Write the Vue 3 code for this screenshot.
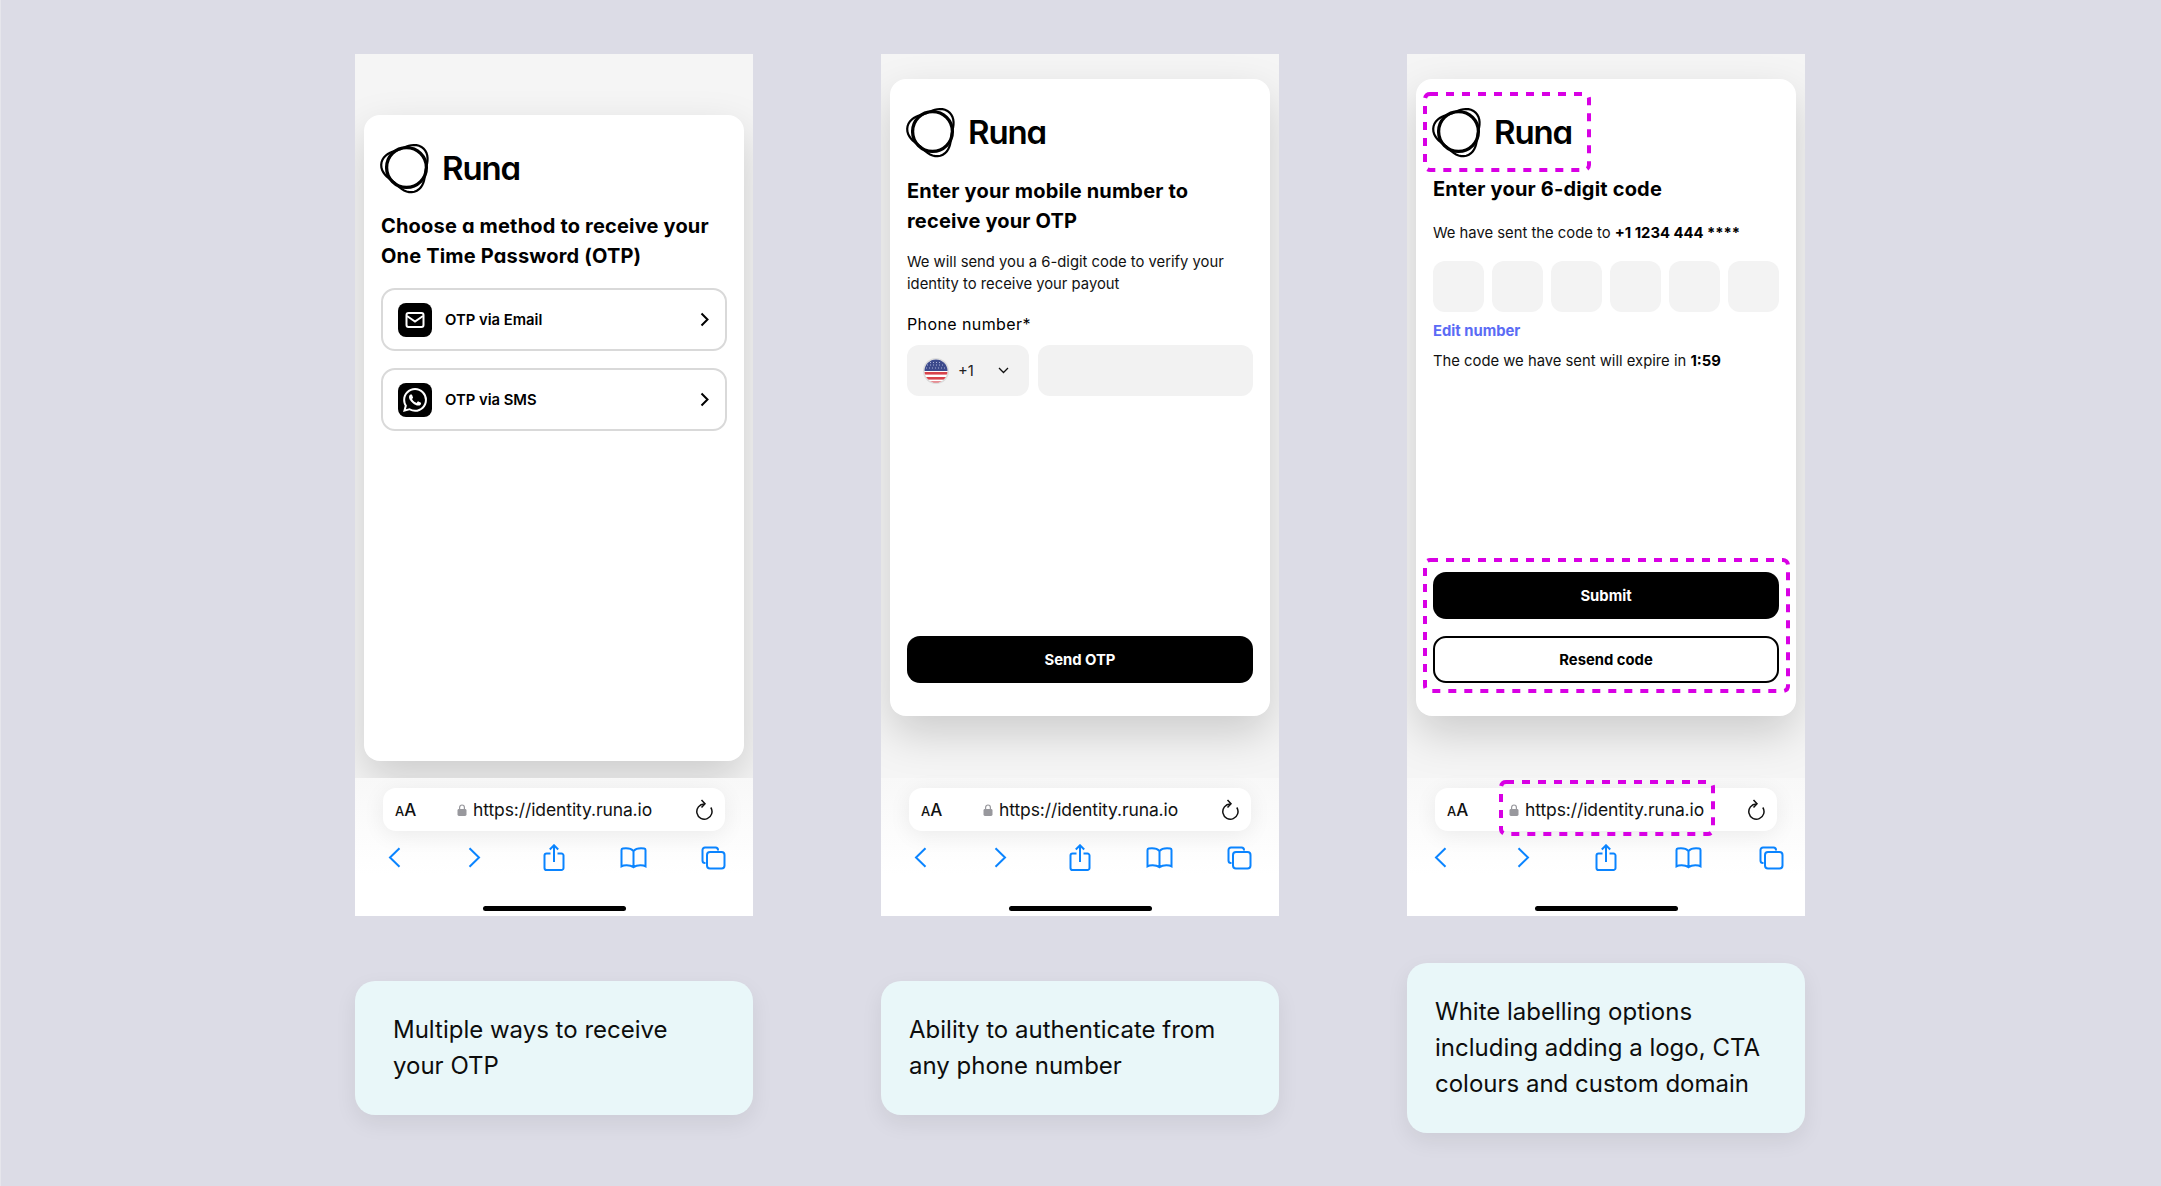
<template>
  <div class="page">
    <div v-for="phone in phones" :key="phone.id" class="column">
      <div class="phone">
        <div class="viewport">
          <div class="card" :class="'card-' + phone.id">
            <div class="logo">
              <svg class="logo-mark" width="53" height="53" viewBox="0 0 53 53" fill="none" stroke="#000">
                <circle cx="26.500" cy="26.500" r="19.900" stroke-width="3.300" />
                <path :d="logoPath" stroke-width="2.200" />
              </svg>
              <span class="logo-text">Runa</span>
            </div>

            <template v-if="phone.id === 'method'">
              <h2 class="title">Choose a method to receive your One Time Password (OTP)</h2>
              <div class="option">
                <span class="option-icon">
                  <svg width="20" height="20" viewBox="0 0 20 20" fill="none" stroke="#fff" stroke-width="2">
                    <rect x="1.500" y="3" width="17" height="14" rx="2" />
                    <path d="M2 6l8 5.500L18 6" />
                  </svg>
                </span>
                <span class="option-label">OTP via Email</span>
                <svg class="chevron" width="10" height="15" viewBox="0 0 10 15" fill="none" stroke="#000" stroke-width="2">
                  <path d="M1.500 1.500l6 6-6 6" />
                </svg>
              </div>
              <div class="option">
                <span class="option-icon">
                  <svg width="24" height="24" viewBox="0 0 24 24" fill="#fff">
                    <path d="M17.472 14.382c-.297-.149-1.758-.867-2.03-.967-.273-.099-.471-.148-.67.15-.197.297-.767.966-.94 1.164-.173.199-.347.223-.644.075-.297-.15-1.255-.463-2.39-1.475-.883-.788-1.48-1.761-1.653-2.059-.173-.297-.018-.458.13-.606.134-.133.298-.347.446-.52.149-.174.198-.298.298-.497.099-.198.05-.371-.025-.52-.075-.149-.669-1.612-.916-2.207-.242-.579-.487-.5-.669-.51-.173-.008-.371-.01-.57-.01-.198 0-.52.074-.792.372-.272.297-1.04 1.016-1.04 2.479 0 1.462 1.065 2.875 1.213 3.074.149.198 2.096 3.2 5.077 4.487.709.306 1.262.489 1.694.625.712.227 1.36.195 1.871.118.571-.085 1.758-.719 2.006-1.413.248-.694.248-1.289.173-1.413-.074-.124-.272-.198-.57-.347m-5.421 7.403h-.004a9.87 9.87 0 01-5.031-1.378l-.361-.214-3.741.982.998-3.648-.235-.374a9.86 9.86 0 01-1.51-5.26c.001-5.45 4.436-9.884 9.888-9.884 2.64 0 5.122 1.03 6.988 2.898a9.825 9.825 0 012.893 6.994c-.003 5.45-4.437 9.884-9.885 9.884m8.413-18.297A11.815 11.815 0 0012.05 0C5.495 0 .16 5.335.157 11.892c0 2.096.547 4.142 1.588 5.945L.057 24l6.305-1.654a11.882 11.882 0 005.683 1.448h.005c6.554 0 11.89-5.335 11.893-11.893a11.821 11.821 0 00-3.48-8.413z" />
                  </svg>
                </span>
                <span class="option-label">OTP via SMS</span>
                <svg class="chevron" width="10" height="15" viewBox="0 0 10 15" fill="none" stroke="#000" stroke-width="2">
                  <path d="M1.500 1.500l6 6-6 6" />
                </svg>
              </div>
            </template>

            <template v-else-if="phone.id === 'phone'">
              <h2 class="title title-low">Enter your mobile number to<br />receive your OTP</h2>
              <p class="intro">We will send you a 6-digit code to verify your identity to receive your payout</p>
              <div class="field-label">Phone number*</div>
              <div class="phone-row">
                <div class="country">
                  <svg class="flag" width="26" height="26" viewBox="0 0 26 26">
                    <defs>
                      <clipPath id="flag-clip"><circle cx="13" cy="13" r="11.500" /></clipPath>
                    </defs>
                    <circle cx="13" cy="13" r="13" fill="#dcdcdc" />
                    <g clip-path="url(#flag-clip)">
                      <rect width="26" height="26" fill="#fff" />
                      <rect width="26" height="13" fill="#3c4a8c" />
                      <rect y="14" width="26" height="2.600" fill="#d8434c" />
                      <rect y="19" width="26" height="2.600" fill="#d8434c" />
                      <rect y="23.400" width="26" height="2.600" fill="#d8434c" />
                      <path d="M4 7h18M3 10h20M7 4.500h12" stroke="#aab2d6" stroke-width="1" stroke-dasharray="1 2" />
                    </g>
                  </svg>
                  <span class="dial">+1</span>
                  <svg class="caret" width="11" height="7" viewBox="0 0 11 7" fill="none" stroke="#111" stroke-width="1.300">
                    <path d="M1 1l4.500 4.500L10 1" />
                  </svg>
                </div>
                <div class="number"></div>
              </div>
              <div class="actions">
                <button class="btn btn-primary">Send OTP</button>
              </div>
            </template>

            <template v-else>
              <h2 class="title title-code">Enter your 6-digit code</h2>
              <p class="sent">We have sent the code to <b>+1 1234 444 ****</b></p>
              <div class="code-row">
                <div v-for="n in 6" :key="n" class="code-box"></div>
              </div>
              <a class="edit">Edit number</a>
              <p class="expire">The code we have sent will expire in <b>1:59</b></p>
              <div class="actions">
                <button class="btn btn-primary">Submit</button>
                <button class="btn btn-outline">Resend code</button>
              </div>
            </template>
          </div>
        </div>

        <div class="browser">
          <div class="url-bar">
            <span class="aa"><small>A</small>A</span>
            <span class="url">
              <svg width="10" height="12" viewBox="0 0 10 12">
                <path d="M2.600 5V3.400a2.400 2.400 0 014.800 0V5" fill="none" stroke="#98989d" stroke-width="1.200" />
                <rect x="0.500" y="5" width="9" height="7" rx="1.400" fill="#98989d" />
              </svg>
              https://identity.runa.io
            </span>
            <svg class="reload" width="18" height="21" viewBox="0 0 18 21" fill="none" stroke="#111" stroke-width="1.500">
              <path d="M15.800 8.500A7.600 7.600 0 1 1 9.200 5" />
              <path d="M6.500 1l3.500 3.800-3.500 3.700" />
            </svg>
          </div>
          <div class="toolbar" :class="{ 'toolbar-wide': phone.id === 'code' }">
            <svg width="13" height="21" viewBox="0 0 13 21"><path d="M11.500 1.200L2 10.500l9.500 9.300" /></svg>
            <svg width="13" height="21" viewBox="0 0 13 21"><path d="M1.500 1.200L11 10.500l-9.500 9.300" /></svg>
            <svg width="22" height="27" viewBox="0 0 22 27">
              <path d="M7.500 9.500H3.600A2.100 2.100 0 0 0 1.500 11.600v12.300A2.100 2.100 0 0 0 3.600 26h14.800a2.100 2.100 0 0 0 2.100-2.100V11.600a2.100 2.100 0 0 0-2.100-2.100h-3.900" />
              <path d="M11 18V1.500M6.800 5.500L11 1.300l4.200 4.200" />
            </svg>
            <svg width="27" height="22" viewBox="0 0 27 22">
              <path d="M13.500 4.200C11.500 1.800 7 1 2.700 1.600 1.900 1.700 1.500 2.200 1.500 3v16.300c1.800-1 8-1.800 12 .9 4-2.700 10.200-1.900 12-.9V3c0-.8-.4-1.300-1.200-1.400C20 1 15.500 1.800 13.500 4.200zM13.500 4.200v16" />
            </svg>
            <svg width="25" height="24" viewBox="0 0 25 24">
              <path d="M4.500 17H4a2.500 2.500 0 0 1-2.500-2.500V4A2.500 2.500 0 0 1 4 1.500h10.500A2.500 2.500 0 0 1 17 4v.5" />
              <rect x="6" y="6" width="17.500" height="16.500" rx="3" />
            </svg>
          </div>
          <div class="home-bar"></div>
        </div>

        <template v-if="phone.id === 'code'">
          <svg
            v-for="box in highlights"
            :key="box.name"
            class="dashed"
            :class="'dashed-' + box.name"
            :width="box.w"
            :height="box.h"
          >
            <rect x="2" y="2" :width="box.w - 4" :height="box.h - 4" rx="5" />
          </svg>
        </template>
      </div>

      <div class="caption-wrap">
        <div class="caption" :class="'caption-' + phone.id">
          <span v-for="line in phone.caption" :key="line">{{ line }}</span>
        </div>
      </div>
    </div>
  </div>
</template>

<script setup>
const phones = [
  { id: 'method', caption: ['Multiple ways to receive', 'your OTP'] },
  { id: 'phone', caption: ['Ability to authenticate from', 'any phone number'] },
  { id: 'code', caption: ['White labelling options', 'including adding a logo, CTA', 'colours and custom domain'] }
]

// the white labelling callouts on the last phone
const highlights = [
  { name: 'logo', w: 168, h: 80 },
  { name: 'cta', w: 367, h: 135 },
  { name: 'url', w: 216, h: 56 }
]

// the Runa mark is a circle with a three-lobed loop round it
const buildLogoPath = () => {
  const points = []
  for (let deg = 0; deg < 360; deg += 6) {
    const a = (deg * Math.PI) / 180
    const r = 22.4 + 3.1 * Math.cos(3 * a + (50 * 3 * Math.PI) / 180)
    points.push((26.5 + r * Math.cos(a)).toFixed(2) + ' ' + (26.5 + r * Math.sin(a)).toFixed(2))
  }
  return 'M' + points.join('L') + 'Z'
}
const logoPath = buildLogoPath()
</script>

<style>
html,
body {
  margin: 0;
  background: #dcdce6;
}
</style>

<style scoped>
.page {
  display: flex;
  gap: 128px;
  height: 1186px;
  box-sizing: border-box;
  padding: 54px 0 7px 354px;
  background: #dcdce6;
  border-left: 1px solid #e6e6ec;
  overflow: hidden;
  font-family: Inter, "Liberation Sans", sans-serif;
  color: #000;
}

.column {
  display: flex;
  flex-direction: column;
  width: 398px;
}

.phone {
  position: relative;
  display: flex;
  flex-direction: column;
  height: 862px;
  flex: none;
}

.viewport {
  height: 724px;
  box-sizing: border-box;
  padding: 25px 9px 0;
  background: #f5f5f5;
  overflow: hidden;
}

.card {
  display: flex;
  flex-direction: column;
  height: 637px;
  box-sizing: border-box;
  padding: 26px 17px 33px 17px;
  background: #fff;
  border-radius: 16px;
  box-shadow: 0 18px 44px rgba(0, 0, 0, 0.17);
}

.card-method {
  height: 646px;
  margin-top: 36px;
}

.logo {
  display: flex;
  align-items: center;
  gap: 9px;
  height: 53px;
  flex: none;
  margin-left: -1px;
}

.logo-mark {
  flex: none;
  overflow: visible;
}

.logo-text {
  font-size: 33px;
  font-weight: 600;
  letter-spacing: -1.1px;
  font-feature-settings: "cv11";
}

.title {
  margin: 18px 0 0;
  font-size: 20px;
  line-height: 29.6px;
  font-weight: 700;
  letter-spacing: 0.18px;
  font-feature-settings: "cv11";
}

.title-low {
  margin-top: 19px;
}

.title-code {
  margin-top: 17px;
}

.option {
  display: flex;
  align-items: center;
  height: 63px;
  box-sizing: border-box;
  margin-top: 17px;
  padding: 0 15px;
  border: 2px solid #d9d9d9;
  border-radius: 14px;
}

.option-icon {
  display: flex;
  align-items: center;
  justify-content: center;
  width: 34px;
  height: 34px;
  margin-right: 13px;
  background: #000;
  border-radius: 8px;
}

.option-label {
  flex: 1;
  font-size: 14.800px;
  font-weight: 600;
}

.intro {
  margin: 16px 0 0;
  font-size: 14.800px;
  line-height: 21.600px;
  color: #111;
}

.field-label {
  margin-top: 19px;
  font-size: 16px;
  line-height: 20px;
  letter-spacing: 0.4px;
}

.phone-row {
  display: flex;
  gap: 9px;
  margin-top: 11px;
}

.country {
  display: flex;
  align-items: center;
  width: 122px;
  height: 51px;
  box-sizing: border-box;
  padding-left: 16px;
  background: #f2f2f2;
  border-radius: 12px;
}

.dial {
  margin-left: 9px;
  font-size: 14.800px;
  color: #222;
}

.caret {
  margin-left: 24px;
}

.number {
  flex: 1;
  height: 51px;
  background: #f2f2f2;
  border-radius: 12px;
}

.actions {
  display: flex;
  flex-direction: column;
  gap: 17px;
  margin-top: auto;
}

.btn {
  height: 47px;
  box-sizing: border-box;
  border-radius: 13px;
  font-family: inherit;
  font-size: 14.800px;
  font-weight: 700;
}

.btn-primary {
  background: #000;
  color: #fff;
  border: none;
}

.btn-outline {
  background: #fff;
  color: #000;
  border: 2px solid #000;
}

.sent {
  margin: 18px 0 0;
  font-size: 14.800px;
  line-height: 20px;
  color: #111;
}

.sent b,
.expire b {
  font-weight: 700;
  color: #000;
}

.code-row {
  display: grid;
  grid-template-columns: repeat(6, 1fr);
  gap: 8.600px;
  margin-top: 18px;
}

.code-box {
  height: 51px;
  background: #f3f3f3;
  border-radius: 12px;
}

.edit {
  margin-top: 9px;
  font-size: 14.800px;
  line-height: 20px;
  font-weight: 700;
  color: #5b6bf5;
}

.expire {
  margin: 10px 0 0;
  font-size: 14.800px;
  line-height: 20px;
  color: #111;
}

.browser {
  flex: 1;
  box-sizing: border-box;
  padding-top: 10px;
  background: linear-gradient(#f8f8f8, #fff 70%);
  display: flex;
  flex-direction: column;
  align-items: center;
}

.url-bar {
  display: flex;
  align-items: center;
  width: 342px;
  height: 43px;
  flex: none;
  box-sizing: border-box;
  padding: 0 12px;
  background: #fff;
  border-radius: 13px;
  box-shadow: 0 4px 22px rgba(0, 0, 0, 0.07);
}

.aa {
  width: 62px;
  font-size: 17px;
  font-weight: 500;
  color: #111;
}

.aa small {
  font-size: 13px;
}

.url {
  display: flex;
  align-items: center;
  gap: 6px;
  flex: 1;
  font-size: 17.500px;
  letter-spacing: -0.1px;
  color: #111;
}

.toolbar {
  display: grid;
  grid-template-columns: repeat(5, 1fr);
  justify-items: center;
  align-items: center;
  flex: none;
  width: 100%;
  height: 27px;
  margin-top: 13px;
}

/* the last phone spreads its toolbar a little wider than the other two */
.toolbar-wide {
  width: 414px;
}

.toolbar svg {
  fill: none;
  stroke: #0a84ff;
  stroke-width: 2;
}

.home-bar {
  width: 143px;
  height: 5.500px;
  margin-top: auto;
  margin-bottom: 5px;
  background: #000;
  border-radius: 3px;
}

.dashed {
  position: absolute;
  fill: none;
  stroke: #d800e4;
  stroke-width: 4;
  stroke-dasharray: 8 8;
}

.dashed-logo {
  left: 16px;
  top: 38px;
}

.dashed-cta {
  left: 16px;
  top: 504px;
}

.dashed-url {
  left: 92px;
  top: 726px;
}

.caption-wrap {
  flex: 1;
  display: flex;
  align-items: center;
}

.caption {
  display: flex;
  flex-direction: column;
  width: 100%;
  box-sizing: border-box;
  padding: 31px 28px;
  background: #e9f7f9;
  border-radius: 20px;
  box-shadow: 0 8px 22px rgba(0, 0, 0, 0.07);
  font-size: 24px;
  line-height: 36px;
  color: #0d0d0d;
}

.caption-method {
  padding-left: 38px;
}

.caption-phone {
  padding-left: 28px;
}
</style>
